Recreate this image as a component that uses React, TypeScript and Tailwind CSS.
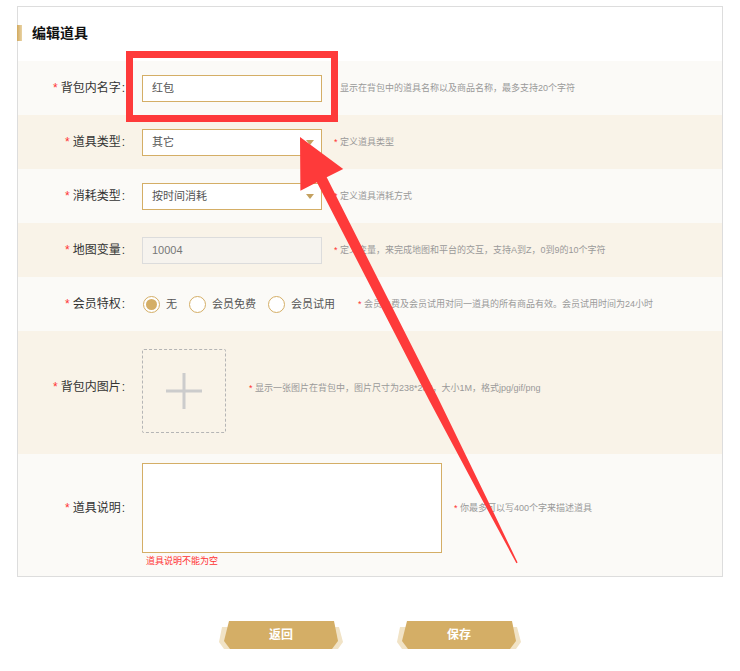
import React from 'react';

const Label = ({ text }: { text: string }) => (
  <div className="w-[107px] shrink-0 text-right text-[12px] leading-[16px] text-[#333]">
    <span className="text-[#f33] mr-[3px]">*</span>
    {text}
    <span className="ml-[1px]">:</span>
  </div>
);

const Hint = ({ text, star = true }: { text: string; star?: boolean }) => (
  <div className="text-[9px] leading-[12px] text-[#999] whitespace-nowrap">
    <span className={star ? 'text-[#f33]' : 'text-transparent'}>*</span> {text}
  </div>
);

const Radio = ({ checked, label }: { checked?: boolean; label: string }) => (
  <div className="flex items-center gap-[6px]">
    <div className="w-[17px] h-[17px] rounded-full border border-[#d4ae66] bg-white flex items-center justify-center">
      {checked && <div className="w-[11px] h-[11px] rounded-full bg-[#d4ae66]" />}
    </div>
    <span className="text-[11px] text-[#555]">{label}</span>
  </div>
);

const SelectBox = ({ value }: { value: string }) => (
  <div className="w-[180px] h-[27px] border border-[#d4ae66] bg-white flex items-center justify-between pl-[9px] pr-[7px] text-[11px] text-[#555]">
    <span>{value}</span>
    <svg width="8" height="5" viewBox="0 0 8 5">
      <path d="M0 0 L8 0 L4 5 Z" fill="#c4a160" />
    </svg>
  </div>
);

const GoldButton = ({ text }: { text: string }) => (
  <button className="relative w-[124px] h-[28px] flex items-center justify-center">
    <svg className="absolute inset-0" width="124" height="28" viewBox="0 0 124 28">
      <path d="M3 6 L0 21 L5 28 L119 28 L124 21 L120 6 Z" fill="#f1e3c6" />
      <path d="M10 0 L115 0 L119 20 L113 28 L11 28 L5 20 Z" fill="#d4ae66" />
    </svg>
    <span className="relative text-[12px] font-bold text-white">{text}</span>
  </button>
);

export default function App() {
  return (
    <div className="relative w-[740px] h-[671px] bg-white font-['Liberation_Sans','Noto_Sans_CJK_SC',sans-serif]">
      <div className="mx-[17px] pt-[6px]">
        <div className="border border-[#dddddd]">
          {/* title */}
          <div className="h-[54px] flex items-center bg-white pb-[2px]">
            <div className="w-[5px] h-[16px] bg-gradient-to-r from-[#d2aa5e] to-[#e9d3a4] mr-[10px] -ml-px" />
            <span className="text-[14px] font-bold text-[#111]">编辑道具</span>
          </div>

          <div className="h-[54px] flex items-center bg-[#fbfaf7]">
            <Label text="背包内名字" />
            <div className="ml-[17px] w-[180px] h-[27px] border border-[#d4ae66] bg-white flex items-center pl-[9px] text-[11px] text-[#555]">
              红包
            </div>
            <div className="ml-[12px]">
              <Hint star={false} text="显示在背包中的道具名称以及商品名称，最多支持20个字符" />
            </div>
          </div>

          <div className="h-[54px] flex items-center bg-[#f9f3e8]">
            <Label text="道具类型" />
            <div className="ml-[17px]">
              <SelectBox value="其它" />
            </div>
            <div className="ml-[12px]">
              <Hint text="定义道具类型" />
            </div>
          </div>

          <div className="h-[54px] flex items-center bg-[#fbfaf7]">
            <Label text="消耗类型" />
            <div className="ml-[17px]">
              <SelectBox value="按时间消耗" />
            </div>
            <div className="ml-[12px]">
              <Hint text="定义道具消耗方式" />
            </div>
          </div>

          <div className="h-[54px] flex items-center bg-[#f9f3e8]">
            <Label text="地图变量" />
            <div className="ml-[17px] w-[180px] h-[27px] border border-[#dcdcdc] bg-[#f6f3ee] flex items-center pl-[9px] text-[11px] text-[#777]">
              10004
            </div>
            <div className="ml-[12px]">
              <Hint text="定义变量，来完成地图和平台的交互，支持A到Z，0到9的10个字符" />
            </div>
          </div>

          <div className="h-[54px] flex items-center bg-[#fbfaf7]">
            <Label text="会员特权" />
            <div className="ml-[18px] flex items-center gap-[12px]">
              <Radio checked label="无" />
              <Radio label="会员免费" />
              <Radio label="会员试用" />
            </div>
            <div className="ml-[23px]">
              <Hint text="会员免费及会员试用对同一道具的所有商品有效。会员试用时间为24小时" />
            </div>
          </div>

          <div className="h-[123px] flex items-center bg-[#f9f3e8] pb-[4px]">
            <div className="pb-[7px]">
              <Label text="背包内图片" />
            </div>
            <div className="ml-[17px] w-[84px] h-[84px] border border-dashed border-[#b5b5b5] rounded-[2px] flex items-center justify-center">
              <svg width="36" height="36" viewBox="0 0 36 36">
                <rect x="0" y="16.5" width="36" height="3" fill="#cccccc" />
                <rect x="16.5" y="0" width="3" height="36" fill="#cccccc" />
              </svg>
            </div>
            <div className="ml-[23px] pb-[6px]">
              <Hint text="显示一张图片在背包中，图片尺寸为238*238，大小1M，格式jpg/gif/png" />
            </div>
          </div>

          <div className="h-[122px] flex items-start pt-[9px] bg-[#fbfaf7]">
            <div className="h-[90px] flex items-center">
              <Label text="道具说明" />
            </div>
            <div className="ml-[17px] flex flex-col">
              <div className="w-[300px] h-[90px] border border-[#d4ae66] bg-white" />
              <div className="mt-[2px] pl-[4px] text-[9px] leading-[12px] text-[#f33]">道具说明不能为空</div>
            </div>
            <div className="ml-[12px] h-[90px] flex items-center">
              <Hint text="你最多可以写400个字来描述道具" />
            </div>
          </div>
        </div>

        <div className="mt-[44px] flex justify-center gap-[54px]">
          <GoldButton text="返回" />
          <GoldButton text="保存" />
        </div>
      </div>

      {/* red annotation overlay */}
      <svg className="absolute inset-0 pointer-events-none" width="740" height="671" viewBox="0 0 740 671">
        <rect x="129.5" y="54.5" width="205" height="64" fill="none" stroke="#fe3a3a" strokeWidth="7" />
        <polygon
          fill="#fe3a3a"
          points="300,137 343.2,168.9 326.7,177.3 437.9,397.8 485.6,495.9 517.6,562.6 516.4,563.2 481.2,498.1 429.9,401.8 316.9,182.3 300.4,190.7"
        />
      </svg>
    </div>
  );
}
